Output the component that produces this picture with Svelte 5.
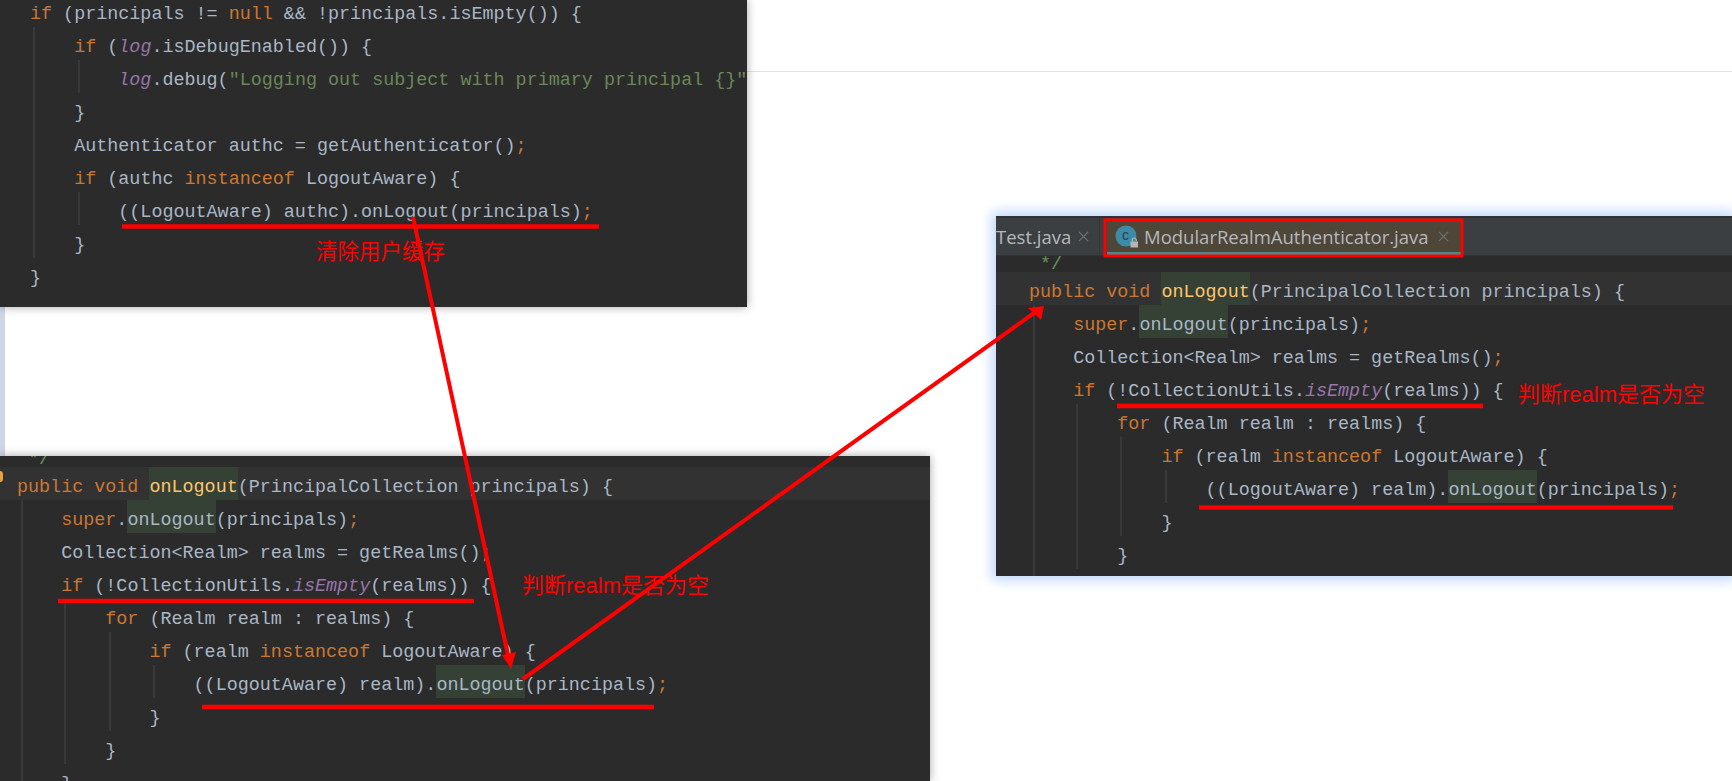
<script>
  // token kinds: k keyword, s string, f static field, m method, h usage highlight, c comment, plain text otherwise
  const k = (text) => ({ kind: 'k', text });
  const h = (text) => ({ kind: 'h', text });

  const logoutRows = [
    { tokens: [' ', { kind: 'c', text: '*/' }] },
    { caret: true, tokens: [k('public void '), { kind: 'm', text: 'onLogout' }, '(PrincipalCollection principals) {'] },
    { tokens: ['    ', k('super'), '.', h('onLogout'), '(principals)', k(';')] },
    { tokens: ['    Collection<Realm> realms = getRealms()', k(';')] },
    { tokens: ['    ', k('if'), ' (!CollectionUtils.', { kind: 'f', text: 'isEmpty' }, '(realms)) {'] },
    { tokens: ['        ', k('for'), ' (Realm realm : realms) {'] },
    { tokens: ['            ', k('if'), ' (realm ', k('instanceof'), ' LogoutAware) {'] },
    { tokens: ['                ((LogoutAware) realm).', h('onLogout'), '(principals)', k(';')] },
    { tokens: ['            }'] },
    { tokens: ['        }'] },
    { tokens: ['    }'] }
  ];

  const subjectRows = [
    { tokens: [k('if'), ' (principals != ', k('null'), ' && !principals.isEmpty()) {'] },
    { tokens: ['    ', k('if'), ' (', { kind: 'f', text: 'log' }, '.isDebugEnabled()) {'] },
    { tokens: ['        ', { kind: 'f', text: 'log' }, '.debug(', { kind: 's', text: '"Logging out subject with primary principal {}"' }] },
    { tokens: ['    }'] },
    { tokens: ['    Authenticator authc = getAuthenticator()', k(';')] },
    { tokens: ['    ', k('if'), ' (authc ', k('instanceof'), ' LogoutAware) {'] },
    { tokens: ['        ((LogoutAware) authc).onLogout(principals)', k(';')] },
    { tokens: ['    }'] },
    { tokens: ['}'] }
  ];

  const subjectGuides = [
    { x: 33, from: 1, to: 8 },
    { x: 78, from: 2, to: 3 },
    { x: 78, from: 6, to: 7 }
  ];
  const bottomGuides = [
    { x: 21, from: 2, to: 11 },
    { x: 64, from: 5, to: 10 },
    { x: 109, from: 6, to: 9 },
    { x: 153, from: 7, to: 8 }
  ];
  const rightGuides = [
    { x: 37, from: 2, to: 11 },
    { x: 80, from: 5, to: 10 },
    { x: 124, from: 6, to: 9 },
    { x: 169, from: 7, to: 8 }
  ];

  const ROW = 33;
</script>

{#snippet code(rows, guides)}
  <div class="code">
    {#each rows as row}
      <div class="row" class:caret={row.caret}>
        {#each row.tokens as token}
          {#if typeof token === 'string'}{token}{:else}<span class={token.kind}>{token.text}</span>{/if}
        {/each}
      </div>
    {/each}
    {#each guides as g}
      <i class="guide" style="left:{g.x}px;top:{g.from * ROW}px;height:{(g.to - g.from) * ROW}px"></i>
    {/each}
  </div>
{/snippet}

<div class="page">
  <div class="rule"></div>
  <div class="strip"></div>

  <section class="win win-top">
    {@render code(subjectRows, subjectGuides)}
  </section>

  <section class="win win-bottom">
    <span class="gutter-mark"></span>
    {@render code(logoutRows, bottomGuides)}
  </section>

  <section class="win win-right">
    <div class="tabs">
      <div class="tab tab-plain">
        <span>Test.java</span>
        <svg class="close" viewBox="0 0 12 12"><path d="M1 1l10 10M11 1L1 11" /></svg>
      </div>
      <div class="tab tab-active">
        <svg class="cls" viewBox="0 0 26 24">
          <circle cx="11" cy="11" r="10.5" fill="#3d8ba8" />
          <text x="10.5" y="15" text-anchor="middle">c</text>
          <rect x="15.5" y="16.5" width="7.5" height="6" fill="#b4b4b4" />
          <path d="M17.2 16.5v-1.5a2 2 0 0 1 4 0v1.5" fill="none" stroke="#b4b4b4" stroke-width="1.2" />
        </svg>
        <span>ModularRealmAuthenticator.java</span>
        <svg class="close" viewBox="0 0 12 12"><path d="M1 1l10 10M11 1L1 11" /></svg>
      </div>
    </div>
    <div class="editor">
      {@render code(logoutRows.slice(0, 10), rightGuides)}
    </div>
  </section>

  <svg class="marks" viewBox="0 0 1732 781">
    <g fill="none" stroke="#ff0000">
      <rect x="1105" y="220" width="357" height="36" stroke-width="3" />
      <g stroke-width="4.5">
        <path d="M122 226.5H599" />
        <path d="M58 601H474" />
        <path d="M202 707H654" />
        <path d="M1117 406H1483" />
        <path d="M1199 507.5H1673" />
      </g>
      <g stroke-width="4">
        <path d="M413 217L508 655" />
        <path d="M523 679L1034 313" />
      </g>
    </g>
    <polygon points="511,669 502,655 516,652" fill="#ff0000" />
    <polygon points="1044,306 1028,308 1041,320" fill="#ff0000" />
  </svg>

  <p class="note note-clear">清除用户缓存</p>
  <p class="note note-bottom">判断realm是否为空</p>
  <p class="note note-right">判断realm是否为空</p>
</div>

<style>
  :global(body) {
    background: #fff;
    overflow: hidden;
  }

  .page {
    position: relative;
    width: 1732px;
    height: 781px;
    overflow: hidden;
    background: #fff;
  }

  .rule {
    position: absolute;
    left: 747px;
    right: 0;
    top: 71px;
    height: 1px;
    background: #e2e2e2;
  }

  .strip {
    position: absolute;
    left: 0;
    top: 307px;
    width: 5px;
    height: 150px;
    background: #cdd7e8;
  }

  .win {
    position: absolute;
    background: #2b2b2b;
    overflow: hidden;
    color: #a9b7c6;
    font: 18.4px/41px "Liberation Mono", monospace;
  }

  .win-top {
    left: 0;
    top: 0;
    width: 747px;
    height: 307px;
    --origin: 30px;
    --shift: -6px;
    box-shadow: 0 0 9px rgba(0, 0, 0, 0.35);
  }

  .win-bottom {
    left: 0;
    top: 456px;
    width: 930px;
    height: 325px;
    --origin: 17px;
    --shift: -22px;
    box-shadow: 0 0 9px rgba(0, 0, 0, 0.35);
  }

  .win-right {
    left: 996px;
    top: 216px;
    width: 736px;
    height: 360px;
    --origin: 33px;
    --shift: -17px;
    box-shadow: 0 0 12px 4px #bcd6fb;
    overflow: visible;
    display: flex;
    flex-direction: column;
  }

  .code {
    position: relative;
    margin-top: var(--shift);
  }

  /* line-height is larger than the row so the glyphs sit low in the 33px band, as in the IDE */
  .row {
    height: 33px;
    padding-left: var(--origin);
    white-space: pre;
  }

  .caret {
    background: #323232;
  }

  .guide {
    position: absolute;
    width: 2px;
    background: #393939;
  }

  .k { color: #cc7832; }
  .s { color: #6a8759; }
  .c { color: #629755; position: relative; top: 5px; }
  .f { color: #9876aa; font-style: italic; }
  .m { color: #ffc66d; background: #344134; display: inline-block; height: 33px; }
  .h { background: #344134; display: inline-block; height: 33px; }

  .gutter-mark {
    position: absolute;
    left: -3px;
    top: 15px;
    width: 6px;
    height: 11px;
    border-radius: 3px;
    background: #e8a33d;
    z-index: 1;
  }

  .tabs {
    display: flex;
    height: 40px;
    flex: none;
    box-sizing: border-box;
    background: #3c3f41;
    border-top: 2px solid #303234;
    border-bottom: 1px solid #323232;
    font: 18.5px/37px "Open Sans", sans-serif;
    color: #b4b9bd;
  }

  .tab {
    display: flex;
    align-items: center;
    box-sizing: border-box;
    white-space: nowrap;
    padding-top: 3px;
  }

  .tab-plain {
    width: 104px;
    padding: 3px 0;
    border-right: 1px solid #333537;
  }

  .tab-plain .close {
    margin-left: 7px;
  }

  .tab-active {
    margin-left: 7px;
    width: 354px;
    padding-left: 8px;
    background: #4e4639;
    border-bottom: 3px solid #4a8a8f;
    color: #b4b9bd;
  }

  .cls {
    width: 26px;
    height: 24px;
    margin-right: 3px;
    flex: none;
  }

  .cls text {
    font: 14px "Liberation Sans", sans-serif;
    fill: #27404a;
  }

  .close {
    width: 11px;
    height: 11px;
    margin-left: 9px;
    flex: none;
  }

  .close path {
    stroke: #6f7173;
    stroke-width: 1.4;
  }

  .editor {
    flex: 1;
    overflow: hidden;
    min-height: 0;
  }

  .marks {
    position: absolute;
    left: 0;
    top: 0;
    width: 1732px;
    height: 781px;
    pointer-events: none;
  }

  .note {
    position: absolute;
    margin: 0;
    color: #ff0000;
    white-space: nowrap;
    font: 22px/30px "Liberation Sans", "Noto Sans CJK SC", sans-serif;
  }

  .note-clear { left: 316px; top: 237px; font-size: 21.5px; }
  .note-bottom { left: 522px; top: 571px; }
  .note-right { left: 1518px; top: 380px; }
</style>
